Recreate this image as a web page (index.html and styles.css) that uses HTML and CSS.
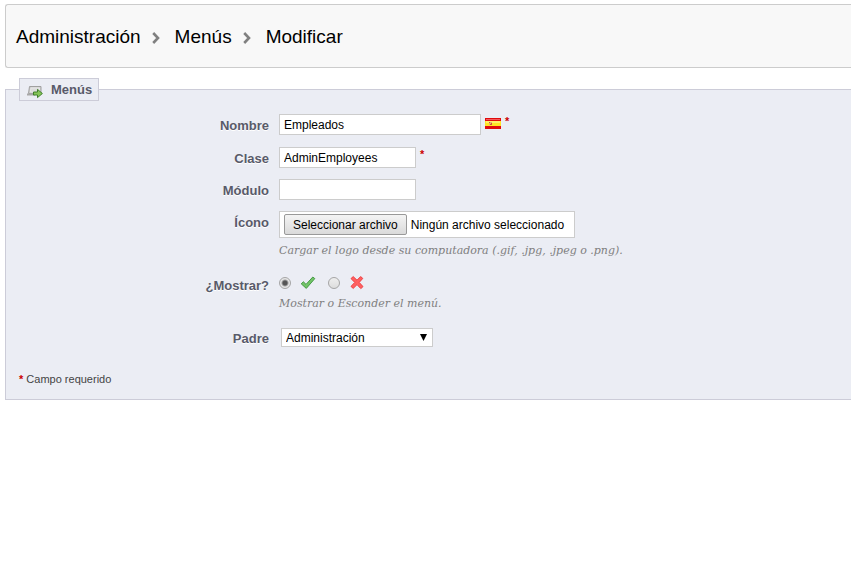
FILE: index.html
```html
<!DOCTYPE html>
<html lang="es">
<head>
    <meta charset="UTF-8">
    <meta name="viewport" content="width=device-width, initial-scale=1.0">
    <title>Menús</title>
    <link rel="stylesheet" href="styles.css">
</head>
<body>
    <nav class="breadcrumb">
        <a href="#">Administración</a>
        <svg class="arrow" width="8" height="12" viewBox="0 0 8 12"><path d="M1.2 1 6 6 1.2 11" fill="none" stroke="#808080" stroke-width="2.6"/></svg>
        <a href="#">Menús</a>
        <svg class="arrow" width="8" height="12" viewBox="0 0 8 12"><path d="M1.2 1 6 6 1.2 11" fill="none" stroke="#808080" stroke-width="2.6"/></svg>
        <a href="#">Modificar</a>
    </nav>

    <form>
        <fieldset class="panel">
            <legend class="panel-title">
                <svg width="16" height="16" viewBox="0 0 16 16">
                    <path d="M2.5 2.5h11.5v6l-1 1H1.5z" fill="#d0d0d0" stroke="#a0a0a0"/>
                    <path d="M4 4h8.5v4H3.4z" fill="#dcdcdc" stroke="#e8e8e8"/>
                    <path d="M0 10.5h8" stroke="#a8a8a8" stroke-width="2"/>
                    <path d="M6.5 8H10.5V5.4L15.4 9.5 10.5 13.6V11H6.5z" fill="#86c558" stroke="#3f7f2b"/>
                </svg>
                Menús
            </legend>

            <div class="row">
                <label class="name" for="nombre">Nombre</label>
                <div class="field">
                    <input class="text wide" type="text" id="nombre" value="Empleados">
                    <svg class="flag" width="16" height="11" viewBox="0 0 16 11">
                        <path d="M0 0h16v11H0z" fill="#e00a0c"/>
                        <path d="M1 1h14v1H1z" fill="#f4595b"/>
                        <path d="M0 3h16v5H0z" fill="#ffe524"/>
                        <path d="M1 3h14v2H1z" fill="#fff06a"/>
                        <path d="M4 4h3v3H4z" fill="#e8b070"/>
                        <path d="M4 4h1v1H4zM6 5h1v1H6zM5 6h2v1H5z" fill="#c8553c"/>
                    </svg>
                    <sup class="star">*</sup>
                </div>
            </div>

            <div class="row">
                <label class="name" for="clase">Clase</label>
                <div class="field">
                    <input class="text" type="text" id="clase" value="AdminEmployees">
                    <sup class="star">*</sup>
                </div>
            </div>

            <div class="row">
                <label class="name" for="modulo">Módulo</label>
                <div class="field">
                    <input class="text" type="text" id="modulo">
                </div>
            </div>

            <div class="row">
                <label class="name" for="icono">Ícono</label>
                <div class="field stack">
                    <label class="file">
                        <input type="file" id="icono" accept=".gif,.jpg,.jpeg,.png">
                        <span class="file-button">Seleccionar archivo</span>
                        <span id="archivo">Ningún archivo seleccionado</span>
                    </label>
                    <p class="help">Cargar el logo desde su computadora (.gif, .jpg, .jpeg o .png).</p>
                </div>
            </div>

            <div class="row spaced">
                <span class="name">¿Mostrar?</span>
                <div class="field stack">
                    <div class="choices">
                        <input class="radio" type="radio" name="mostrar" id="si" checked>
                        <label for="si" aria-label="Sí">
                            <svg width="16" height="16" viewBox="0 0 16 16"><path d="M1.2 8.8 3.4 6.8 6 9.4 12.8 2l2 1.6L6.3 13.4z" fill="#72c466" stroke="#469a48" stroke-linejoin="round"/></svg>
                        </label>
                        <input class="radio" type="radio" name="mostrar" id="no">
                        <label for="no" aria-label="No">
                            <svg width="16" height="16" viewBox="0 0 16 16"><path d="M2 3.6 4.2 1.6 8 5.2 11.6 1.6 13.8 3.4 10.2 7.4 14 11.6 11.8 13.6 8 9.6 4.2 13.4 2 11.4 5.8 7.4z" fill="#ff6060" stroke="#ee4144" stroke-linejoin="round"/></svg>
                        </label>
                    </div>
                    <p class="help">Mostrar o Esconder el menú.</p>
                </div>
            </div>

            <div class="row spaced">
                <label class="name" for="padre">Padre</label>
                <div class="field">
                    <div class="select">
                        <select id="padre">
                            <option>Administración</option>
                        </select>
                        <svg width="7" height="7" viewBox="0 0 7 7"><path d="M0 0h7L3.5 7z"/></svg>
                    </div>
                </div>
            </div>

            <p class="required"><sup class="star">*</sup> Campo requerido</p>
        </fieldset>
    </form>

    <script>
        document.getElementById('icono').addEventListener('change', (event) => {
            const file = event.target.files[0];
            document.getElementById('archivo').textContent = file ? file.name : 'Ningún archivo seleccionado';
        });
    </script>
</body>
</html>
```
FILE: styles.css
```css
body {
    margin: 4px 0 0 5px;
    font-family: "Liberation Sans", Arial, sans-serif;
    font-size: 12px;
    color: #000;
    background-color: #fff;
}

.breadcrumb {
    display: flex;
    align-items: center;
    padding: 21px 10px 19px;
    border: 1px solid #ccc;
    border-right: none;
    border-radius: 3px 0 0 3px;
    background-color: #f8f8f8;
    font-size: 19px;
    line-height: 22px;
}

.breadcrumb a {
    color: #000;
    text-decoration: none;
}

.arrow {
    margin: 2px 15px 0 11px;
}

.panel {
    margin: 10px 0 0;
    padding: 13px;
    border: 1px solid #ccccd8;
    border-right: none;
    background-color: #ebedf4;
}

.panel-title {
    display: flex;
    align-items: center;
    gap: 8px;
    padding: 1px 6px 0 7px;
    border: 1px solid #ccccd8;
    background-color: #ebedf4;
    color: #585a69;
    font-size: 13px;
    font-weight: bold;
    line-height: 20px;
}

.panel-title svg {
    margin-top: 4px;
}

.row {
    display: grid;
    grid-template-columns: 250px 1fr;
    column-gap: 10px;
    margin-bottom: 11px;
}

.row:first-of-type {
    margin-bottom: 12px;
}

.name {
    padding-top: 4px;
    color: #585a69;
    font-size: 13px;
    font-weight: bold;
    line-height: 16px;
    text-align: right;
    text-shadow: 0 1px 0 #fff;
}

.field {
    display: flex;
    align-items: flex-start;
    gap: 4px;
}

.stack {
    flex-direction: column;
    gap: 6px;
}

.text {
    box-sizing: border-box;
    width: 137px;
    height: 21px;
    padding: 0 4px;
    border: 1px solid #ccc;
    background-color: #fff;
    color: #000;
    font: inherit;
}

.wide {
    width: 202px;
}

.flag {
    margin-top: 4px;
}

.star {
    color: #c00;
    font-size: 11px;
    font-weight: bold;
    line-height: 14px;
    vertical-align: baseline;
}

.file {
    display: flex;
    align-items: center;
    gap: 4px;
    box-sizing: border-box;
    min-width: 296px;
    padding: 2px 4px;
    border: 1px solid #ccc;
    background-color: #fff;
}

.file input {
    position: absolute;
    width: 1px;
    height: 1px;
    opacity: 0;
}

.file-button {
    padding: 2px 8px 0;
    border: 1px solid #999;
    border-radius: 2px;
    background: linear-gradient(#f4f4f4, #dadada);
    line-height: 17px;
}

.help {
    margin: 0;
    color: #7f7f7f;
    font-family: "DejaVu Serif", Georgia, serif;
    font-size: 11px;
    font-style: italic;
    line-height: 14px;
}

.spaced {
    margin-top: 17px;
}

.spaced .name {
    padding-top: 3px;
}

.choices {
    display: flex;
    align-items: center;
}

.choices label {
    display: flex;
    margin: 0 12px 0 9px;
}

.radio {
    appearance: none;
    width: 12px;
    height: 12px;
    margin: 0;
    border: 1px solid #a5a5a5;
    border-radius: 50%;
    background: linear-gradient(#eee, #ddd);
}

.radio:checked {
    background: radial-gradient(circle, #555 2px, #e6e6e6 4px);
}

.select {
    display: flex;
    align-items: center;
    margin-left: 2px;
}

.select select {
    appearance: none;
    box-sizing: border-box;
    width: 152px;
    height: 19px;
    padding: 0 20px 0 4px;
    border: 1px solid #ccc;
    border-radius: 0;
    background-color: #fff;
    color: #000;
    font: inherit;
}

.select svg {
    margin-left: -13px;
    pointer-events: none;
}

.required {
    margin: 25px 0 0;
    color: #444;
    font-size: 11px;
    line-height: 14px;
}
```
